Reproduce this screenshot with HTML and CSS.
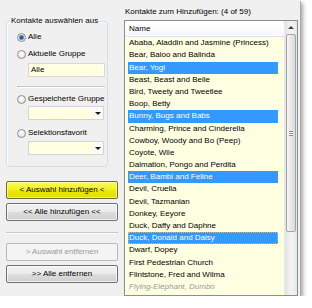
FILE: index.html
```html
<!DOCTYPE html>
<html>
<head>
<meta charset="utf-8">
<link rel="stylesheet" href="styles.css">
</head>
<body>
<div class="window">
  <div class="left">
    <fieldset class="group">
      <legend>Kontakte auswählen aus</legend>
      <div class="opt opt-1"><span class="radio checked"></span><span>Alle</span></div>
      <div class="opt opt-2"><span class="radio"></span><span>Aktuelle Gruppe</span></div>
      <div class="textbox">Alle</div>
      <div class="sep"></div>
      <div class="opt opt-3"><span class="radio"></span><span>Gespeicherte Gruppe</span></div>
      <div class="combo combo-1"><span class="combo-field"></span><span class="combo-btn"><span class="arrow"></span></span></div>
      <div class="opt opt-4"><span class="radio"></span><span>Selektionsfavorit</span></div>
      <div class="combo combo-2"><span class="combo-field"></span><span class="combo-btn"><span class="arrow"></span></span></div>
    </fieldset>
    <button class="btn btn-yellow">&lt; Auswahl hinzufügen &lt;</button>
    <button class="btn btn-add-all">&lt;&lt; Alle hinzufügen &lt;&lt;</button>
    <div class="hsep"></div>
    <button class="btn btn-remove" disabled>&gt; Auswahl entfernen</button>
    <button class="btn btn-remove-all">&gt;&gt; Alle entfernen</button>
  </div>
  <div class="right">
    <div class="caption">Kontakte zum Hinzufügen: (4 of 59)</div>
    <div class="listview">
      <div class="lv-main">
        <div class="lv-header">Name</div>
        <div class="lv-rows">
          <div class="row">Ababa, Aladdin and Jasmine (Princess)</div>
          <div class="row">Bear, Baloo and Balinda</div>
          <div class="row sel">Bear, Yogi</div>
          <div class="row">Beast, Beast and Belle</div>
          <div class="row">Bird, Tweety and Tweetlee</div>
          <div class="row">Boop, Betty</div>
          <div class="row sel">Bunny, Bugs and Babs</div>
          <div class="row">Charming, Prince and Cinderella</div>
          <div class="row">Cowboy, Woody and Bo (Peep)</div>
          <div class="row">Coyote, Wile</div>
          <div class="row">Dalmation, Pongo and Perdita</div>
          <div class="row sel">Deer, Bambi and Feline</div>
          <div class="row">Devil, Cruella</div>
          <div class="row">Devil, Tazmanian</div>
          <div class="row">Donkey, Eeyore</div>
          <div class="row">Duck, Daffy and Daphne</div>
          <div class="row sel focus">Duck, Donald and Daisy</div>
          <div class="row">Dwarf, Dopey</div>
          <div class="row">First Pedestrian Church</div>
          <div class="row">Flintstone, Fred and Wilma</div>
          <div class="row dim">Flying-Elephant, Dumbo</div>
        </div>
      </div>
      <div class="scrollbar">
        <div class="sb-up"><span class="up-arrow"></span></div>
        <div class="sb-thumb"><span class="grip"></span></div>
      </div>
    </div>
  </div>
</div>
</body>
</html>
```

FILE: styles.css
```css
html, body {
  margin: 0;
  padding: 0;
  background: #ffffff;
}
body {
  font-family: "Liberation Sans", Arial, sans-serif;
  font-size: 8px;
  color: #000;
}
.window {
  width: 300px;
  height: 296px;
  box-sizing: border-box;
  background: #f0f0f0;
  display: flex;
  gap: 6px;
  padding: 0 2px 0 6px;
  overflow: hidden;
  box-shadow: 1px 1px 0 #a8a8a8, 3px 3px 4px rgba(0, 0, 0, 0.35);
}
.left {
  width: 112px;
  padding-top: 16px;
  display: flex;
  flex-direction: column;
  flex: none;
}
.group {
  width: 102px;
  box-sizing: border-box;
  margin: 0;
  padding: 0 0 11px 0;
  min-width: 0;
  border: 1px solid #d5dfe5;
  border-radius: 3px;
  box-shadow: inset 1px 1px 0 #fff;
}
.group legend {
  font-size: 8px;
  line-height: 10px;
  padding: 0 1px;
  margin-left: 3px;
  color: #000;
}
.opt {
  display: flex;
  align-items: center;
  height: 10px;
  line-height: 10px;
  padding-left: 10px;
  gap: 2px;
  white-space: nowrap;
}
.opt-1 { margin-top: 6px; }
.opt-2 { margin-top: 7px; }
.opt-3 { margin-top: 6px; }
.opt-4 { margin-top: 8px; }
.radio {
  width: 9px;
  height: 9px;
  flex: none;
  box-sizing: border-box;
  border-radius: 50%;
  border: 1px solid #8e8f8f;
  background: radial-gradient(circle at 50% 40%, #ffffff 0%, #ececec 55%, #cfcfcf 100%);
}
.radio.checked {
  background: radial-gradient(circle, #1c4a82 0, #2f6db3 1.6px, #8fb6e2 2.6px, #e8e8e8 3px, #d0d0d0 100%);
}
.textbox {
  margin: 4px 0 0 21px;
  width: 77px;
  height: 14px;
  box-sizing: border-box;
  border: 1px solid #d8d8d8;
  background: #ffffe1;
  line-height: 12px;
  padding-left: 2px;
}
.sep {
  margin: 9px 0 0 10px;
  width: 88px;
  height: 0;
  border-top: 1px solid #c6c6c6;
  border-bottom: 1px solid #ffffff;
}
.combo {
  margin-left: 21px;
  width: 76px;
  height: 14px;
  box-sizing: border-box;
  border: 1px solid #d4d4d4;
  display: flex;
  background: #ffffe1;
}
.combo-1 { margin-top: 2px; }
.combo-2 { margin-top: 3px; }
.combo-field { flex: 1; }
.combo-btn {
  width: 11px;
  background: #fbfbf4;
  display: flex;
  align-items: center;
  justify-content: center;
}
.arrow {
  width: 0;
  height: 0;
  border-left: 3px solid transparent;
  border-right: 3px solid transparent;
  border-top: 3px solid #1a1a1a;
}
.btn {
  display: block;
  width: 112px;
  height: 18px;
  box-sizing: border-box;
  margin: 0;
  padding: 0;
  font-family: inherit;
  font-size: 8px;
  line-height: 16px;
  color: #000;
  text-align: center;
  border: 1px solid #707070;
  border-radius: 2px;
  background: linear-gradient(#f2f2f2 0%, #ebebeb 48%, #dddddd 52%, #cfcfcf 100%);
  box-shadow: inset 0 0 0 1px rgba(255, 255, 255, 0.7);
}
.btn-yellow {
  margin-top: 14px;
  border-color: #6c6c3c;
  background: linear-gradient(#fafa5c 0%, #f2f21a 48%, #eaea00 52%, #dede00 100%);
  box-shadow: inset 0 0 0 1px rgba(255, 255, 190, 0.6);
}
.btn-add-all { margin-top: 4px; }
.hsep {
  margin-top: 11px;
  height: 0;
  border-top: 1px solid #c8c8c8;
  border-bottom: 1px solid #ffffff;
}
.btn-remove {
  margin-top: 9px;
  border-color: #b5b9bc;
  background: #f4f4f4;
  color: #9a9a9a;
  box-shadow: none;
}
.btn-remove-all { margin-top: 4px; }
.right {
  width: 174px;
  flex: none;
  display: flex;
  flex-direction: column;
}
.caption {
  padding: 7px 0 0 1px;
  line-height: 10px;
  height: 10px;
  margin-bottom: 3px;
  white-space: nowrap;
}
.listview {
  flex: 1;
  display: flex;
  border: 1px solid #8a8f96;
  background: #ffffe1;
  overflow: hidden;
}
.lv-main {
  flex: 1;
  min-width: 0;
}
.lv-header {
  height: 15px;
  line-height: 15px;
  padding-left: 4px;
  background: linear-gradient(#ffffff, #f7f8fa);
  border-bottom: 1px solid #e2e3e5;
}
.lv-rows {
  padding-top: 0.2px;
}
.row {
  height: 12.2px;
  line-height: 12.2px;
  margin-left: 3px;
  width: 150px;
  box-sizing: border-box;
  padding-left: 1px;
  white-space: nowrap;
  overflow: hidden;
}
.row.sel {
  background: #3399ff;
  color: #ffffff;
}
.row.focus {
  outline: 1px dotted #d9b77a;
  outline-offset: -1px;
}
.row.dim {
  color: #9a9a9a;
  font-style: italic;
}
.scrollbar {
  width: 12px;
  flex: none;
  background: linear-gradient(90deg, #e3e3e3, #f1f1f1 40%, #f1f1f1 70%, #e6e6e6);
  border-left: 1px solid #e8e8e8;
  display: flex;
  flex-direction: column;
  align-items: center;
}
.sb-up {
  height: 12px;
  width: 100%;
  display: flex;
  align-items: center;
  justify-content: center;
}
.up-arrow {
  width: 0;
  height: 0;
  border-left: 3px solid transparent;
  border-right: 3px solid transparent;
  border-bottom: 3px solid #404040;
}
.sb-thumb {
  margin-top: 1px;
  width: 10px;
  height: 198px;
  box-sizing: border-box;
  border: 1px solid #a5a5a5;
  border-radius: 2px;
  background: linear-gradient(90deg, #f4f4f4, #e8e8e8 50%, #dadada);
  display: flex;
  align-items: center;
  justify-content: center;
}
.grip {
  width: 4px;
  height: 3px;
  border-top: 1px solid #8a8a8a;
  border-bottom: 1px solid #8a8a8a;
  background: linear-gradient(#ffffff 0, #ffffff 1px, #8a8a8a 1px, #8a8a8a 2px, #ffffff 2px);
}
```
